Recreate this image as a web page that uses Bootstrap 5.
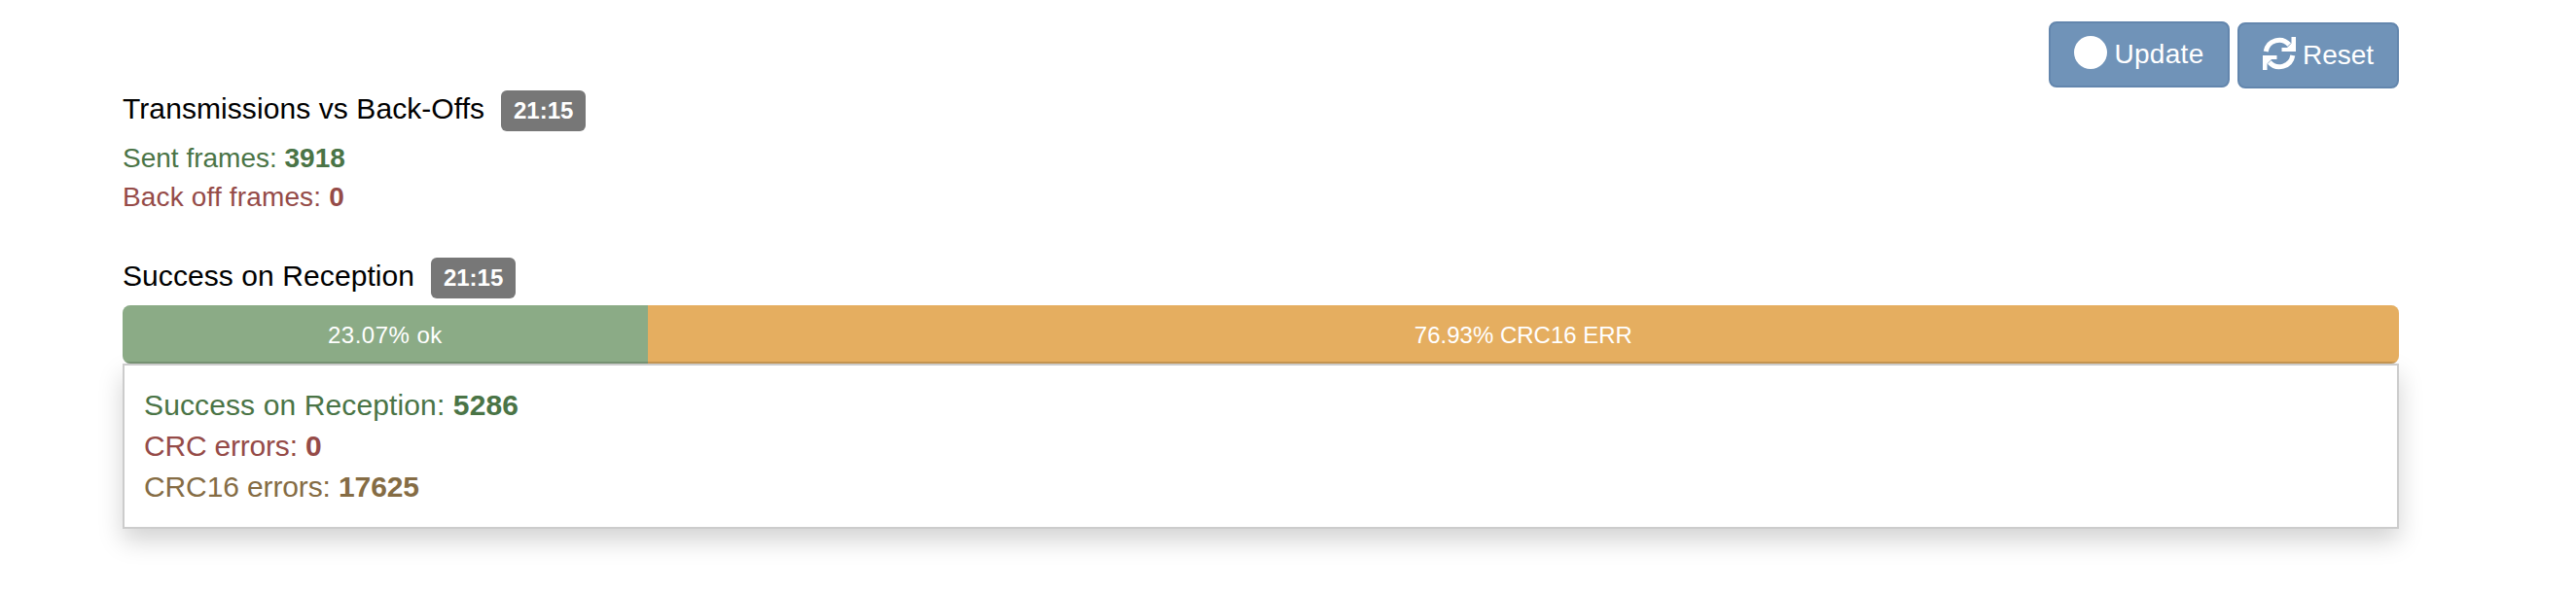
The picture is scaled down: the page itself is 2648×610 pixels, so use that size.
<!DOCTYPE html>
<html lang="en">
<head>
  <meta charset="UTF-8">
  <title>Radio Statistics</title>
  <link href="https://cdn.jsdelivr.net/npm/bootstrap@5.3.0/dist/css/bootstrap.min.css" rel="stylesheet">
  <style>
    body {
      font-family: "Liberation Sans", Arial, sans-serif;
      font-size: 28px;
      line-height: 40px;
      color: #000;
      background: #fff;
    }
    .stats-page {
      min-height: 610px;
      padding: 22px 182px 0 126px;
    }
    .stats-toolbar {
      height: 71px;
    }
    .btn-stats {
      --bs-btn-color: #fff;
      --bs-btn-bg: #7093b8;
      --bs-btn-border-color: #6386ad;
      --bs-btn-hover-color: #fff;
      --bs-btn-hover-bg: #6386ad;
      --bs-btn-border-width: 2px;
      --bs-btn-border-radius: 8px;
      --bs-btn-padding-x: 24px;
      --bs-btn-padding-y: 12px;
      --bs-btn-font-size: 28px;
      --bs-btn-line-height: 40px;
      height: 68px;
      gap: 7px;
      white-space: nowrap;
    }
    .btn-stats svg {
      width: 34px;
      height: 34px;
      margin-top: -5px;
      flex: none;
    }
    .btn-update {
      width: 186px;
      letter-spacing: .3px;
    }
    .btn-reset {
      width: 166px;
      margin-top: 1px;
    }
    .stats-heading {
      font-size: 30px;
      font-weight: 400;
      line-height: 38px;
      letter-spacing: .08px;
      margin: 0 17px 0 0;
    }
    .time-badge {
      width: 87px;
      height: 42px;
      padding: 0;
      line-height: 41px;
      font-size: 24px;
      background: #777;
      border-radius: 6px;
    }
    .transmissions {
      margin-bottom: 42px;
    }
    .transmissions .txt-error { letter-spacing: .15px; }
    .txt-ok { color: #4a7446; }
    .txt-error { color: #954b48; }
    .txt-crc16 { color: #856c44; }
    .reception-bar {
      --bs-progress-height: 60px;
      --bs-progress-font-size: 24px;
      --bs-progress-border-radius: 8px;
      margin-top: 7px;
    }
    .reception-bar .progress-bar {
      line-height: 59px;
      box-shadow: inset 0 -2px 0 rgba(0, 0, 0, .15);
    }
    .reception-bar .bar-ok {
      background: #8bab86;
      letter-spacing: .5px;
    }
    .reception-bar .bar-crc16 { background: #e5ae60; }
    .reception-details {
      height: 170px;
      padding: 20px;
      font-size: 30px;
      line-height: 42px;
      border: 2px solid #ccc;
      background: #fff;
      box-shadow: 0 12px 24px rgba(0, 0, 0, .175);
    }
    .reception-details .txt-ok { letter-spacing: .12px; }
    .reception-details .txt-error { letter-spacing: -.2px; }
    .reception-details .txt-crc16 { letter-spacing: -.12px; }
  </style>
</head>
<body>
  <div class="stats-page">
    <div class="stats-toolbar d-flex justify-content-end gap-2">
      <button type="button" class="btn btn-stats btn-update d-flex align-items-center justify-content-center">
        <svg viewBox="0 0 34 34" aria-hidden="true"><circle cx="17" cy="17" r="17" fill="#fff"/></svg>
        <span>Update</span>
      </button>
      <button type="button" class="btn btn-stats btn-reset d-flex align-items-center justify-content-center">
        <svg viewBox="0 0 34 34" aria-hidden="true">
          <path d="M3.2 15A13.8 13.8 0 0 1 27.200 8M30.800 19A13.800 13.800 0 0 1 6.800 26" fill="none" stroke="#fff" stroke-width="5"/>
          <path d="M34 0V15H19.500V11H25L29.500 6.500V0ZM0 34V19H14.500V23H9L4.500 27.500V34Z" fill="#fff"/>
        </svg>
        <span>Reset</span>
      </button>
    </div>

    <section class="transmissions">
      <div class="d-flex mb-2">
        <h4 class="stats-heading">Transmissions vs Back-Offs</h4>
        <span class="badge time-badge">21:15</span>
      </div>
      <div class="txt-ok">Sent frames: <b>3918</b></div>
      <div class="txt-error">Back off frames: <b>0</b></div>
    </section>

    <section>
      <div class="d-flex">
        <h4 class="stats-heading">Success on Reception</h4>
        <span class="badge time-badge">21:15</span>
      </div>
      <div class="progress reception-bar">
        <div class="progress-bar bar-ok" style="width: 23.07%">23.07% ok</div>
        <div class="progress-bar bar-crc16" style="width: 76.93%">76.93% CRC16 ERR</div>
      </div>
      <div class="reception-details">
        <div class="txt-ok">Success on Reception: <b>5286</b></div>
        <div class="txt-error">CRC errors: <b>0</b></div>
        <div class="txt-crc16">CRC16 errors: <b>17625</b></div>
      </div>
    </section>
  </div>
  <script src="https://cdn.jsdelivr.net/npm/bootstrap@5.3.0/dist/js/bootstrap.bundle.min.js"></script>
</body>
</html>
